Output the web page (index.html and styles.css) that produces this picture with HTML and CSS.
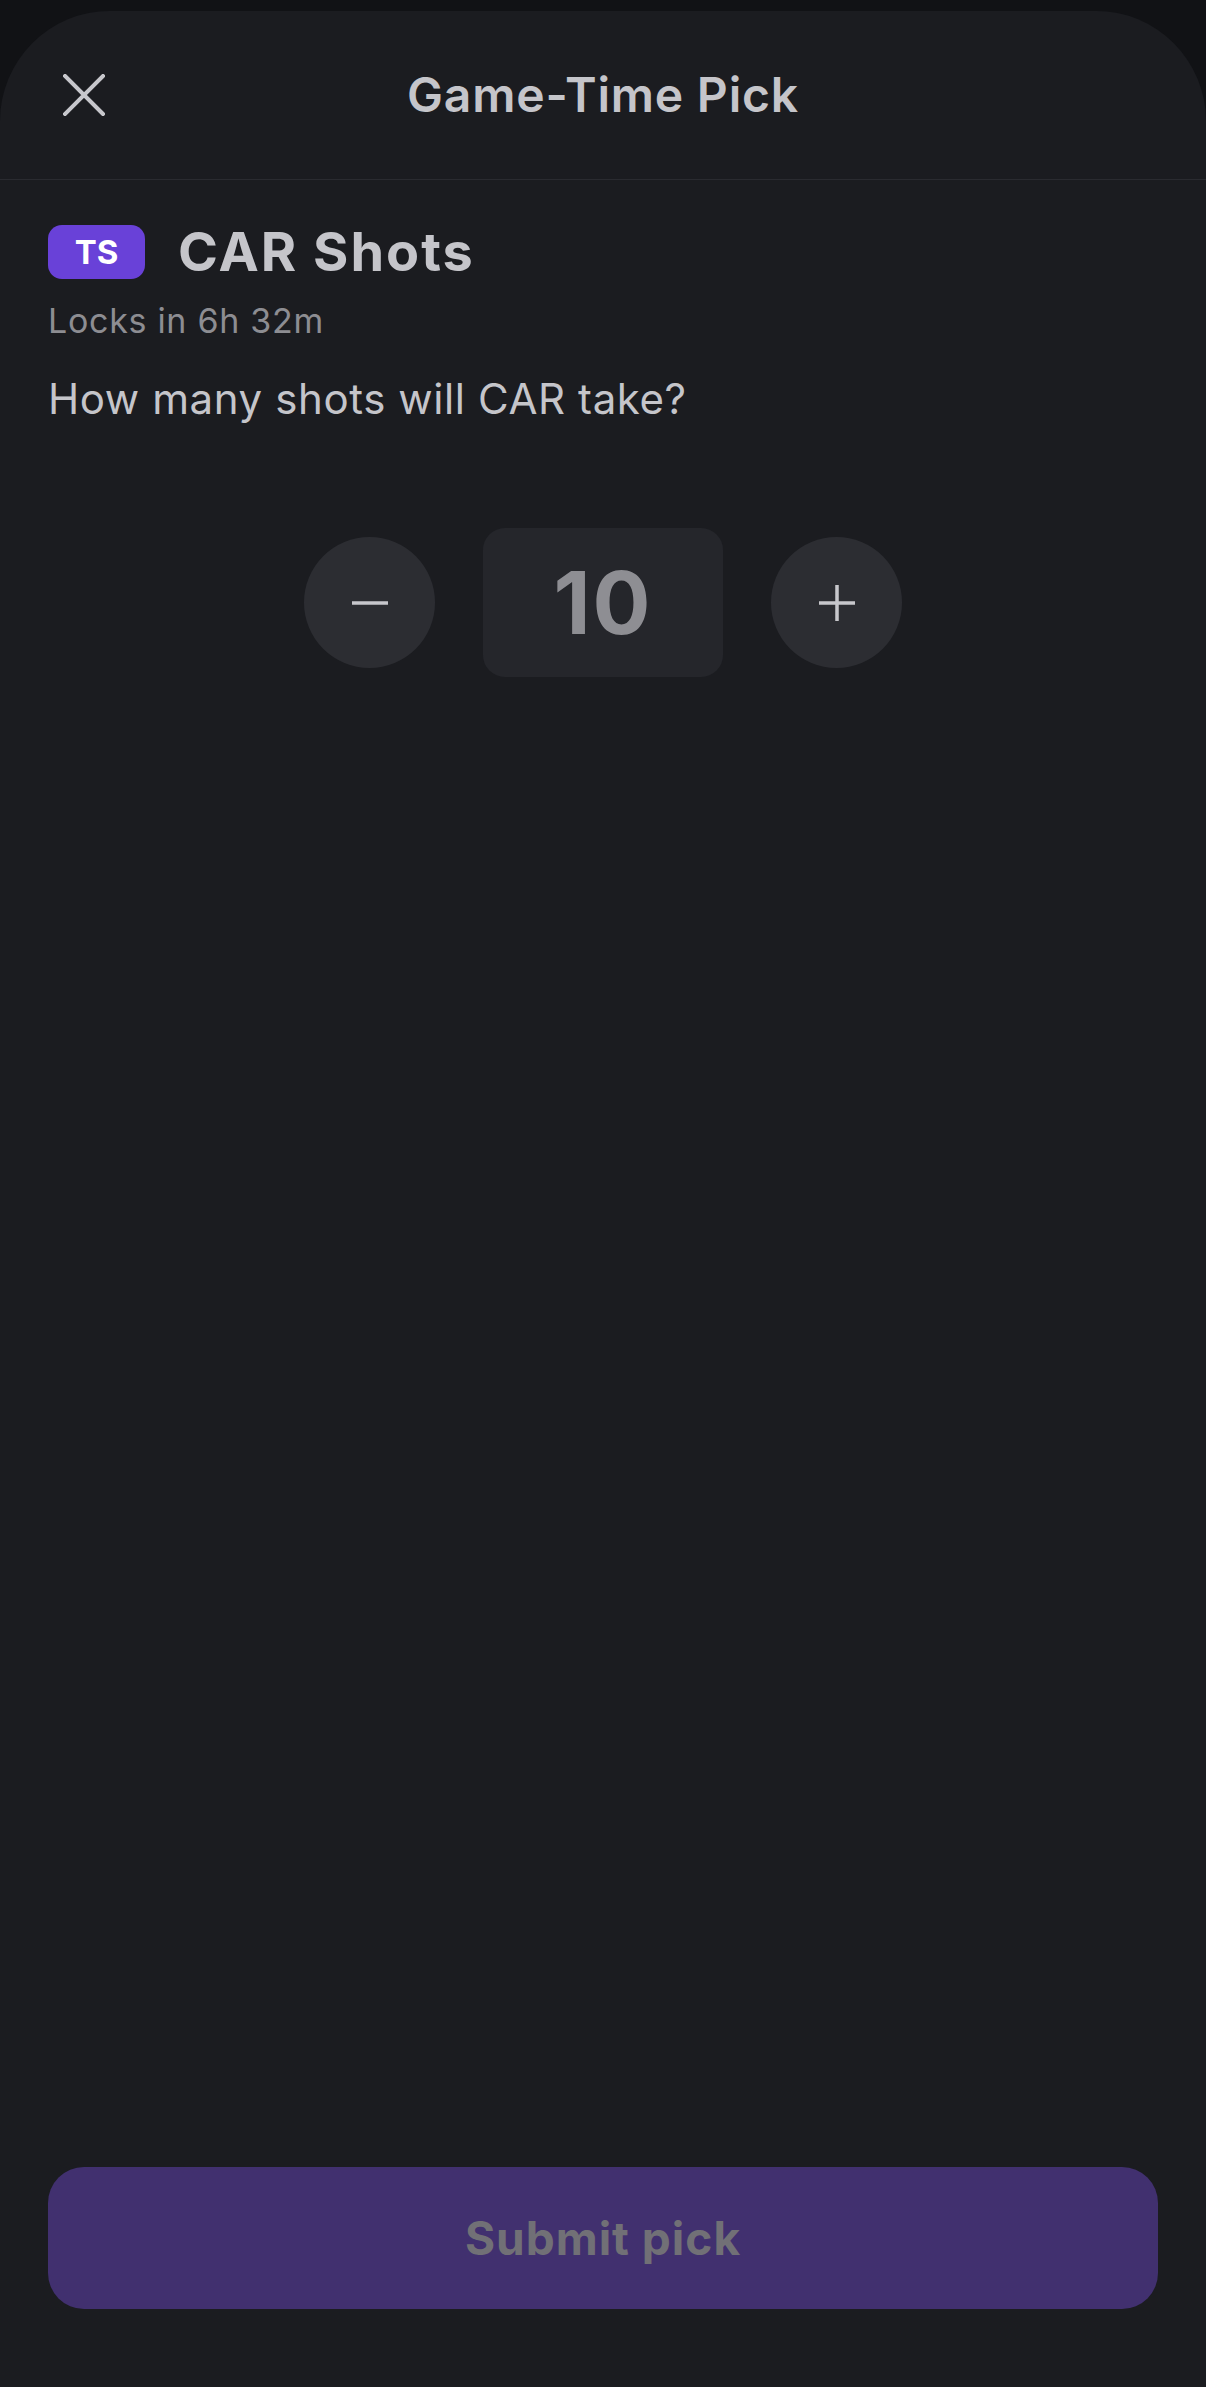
FILE: index.html
```html
<!DOCTYPE html>
<html>
<head>
  <meta charset="utf-8">
  <title>Game-Time Pick</title>
  <link rel="stylesheet" href="styles.css">
</head>
<body>
<div class="sheet">
  <header class="sheet-header">
    <div class="close-wrap">
      <button class="close-btn" type="button" aria-label="Close">
        <svg width="42" height="42" viewBox="0 0 42 42">
          <path d="M2 2 L40 40 M40 2 L2 40" stroke="#c7c7cc" stroke-width="4" stroke-linecap="square" fill="none"/>
        </svg>
      </button>
    </div>
    <h1>Game-Time Pick</h1>
    <div></div>
  </header>

  <div class="content">
    <div class="pick-title">
      <span class="badge">TS</span>
      <h2>CAR Shots</h2>
    </div>
    <p class="locks">Locks in 6h 32m</p>
    <p class="question">How many shots will CAR take?</p>

    <div class="stepper">
      <button class="step-btn" type="button" aria-label="Decrease">
        <svg width="36" height="36" viewBox="0 0 36 36">
          <path d="M0 18 H36" stroke="#c7c7cc" stroke-width="3.5" fill="none"/>
        </svg>
      </button>
      <div class="step-value">10</div>
      <button class="step-btn" type="button" aria-label="Increase">
        <svg width="36" height="36" viewBox="0 0 36 36">
          <path d="M0 18 H36 M18 0 V36" stroke="#c7c7cc" stroke-width="3.5" fill="none"/>
        </svg>
      </button>
    </div>
  </div>

  <div class="spacer"></div>

  <div class="footer">
    <button class="submit-btn" type="button" disabled>Submit pick</button>
  </div>
</div>
</body>
</html>
```

FILE: styles.css
```css
html, body {
  margin: 0;
  padding: 0;
}
body {
  background-color: #111215;
  font-family: Inter, "Noto Sans", "Liberation Sans", sans-serif;
  padding-top: 11px;
}
.sheet {
  background-color: #1b1c20;
  border-radius: 110px 110px 0 0;
  min-height: calc(100vh - 11px);
  display: flex;
  flex-direction: column;
}
.sheet-header {
  height: 168px;
  border-bottom: 1px solid #2a2b30;
  display: grid;
  grid-template-columns: 1fr auto 1fr;
  align-items: center;
}
.close-wrap {
  padding-left: 63px;
}
.close-btn {
  background: none;
  border: none;
  padding: 0;
  width: 42px;
  height: 42px;
  display: block;
  cursor: pointer;
}
.sheet-header h1 {
  margin: 0;
  font-size: 48px;
  font-weight: 600;
  letter-spacing: 0.8px;
  color: #c5c5ca;
  line-height: 56px;
}
.content {
  padding: 45px 48px 0 48px;
}
.pick-title {
  display: flex;
  align-items: center;
  height: 54px;
}
.badge {
  width: 97px;
  height: 54px;
  border-radius: 14px;
  background-color: #6941d8;
  color: #ffffff;
  font-size: 33px;
  font-weight: 700;
  display: flex;
  align-items: center;
  justify-content: center;
  margin-right: 33px;
}
.pick-title h2 {
  margin: 0;
  font-size: 54px;
  font-weight: 700;
  letter-spacing: 2px;
  color: #c5c5ca;
  line-height: 60px;
}
.locks {
  margin: 22px 0 0 0;
  font-size: 34px;
  letter-spacing: 0.7px;
  line-height: 40px;
  color: #8d8d92;
}
.question {
  margin: 33px 0 0 0;
  font-size: 42px;
  letter-spacing: 0.6px;
  line-height: 50px;
  color: #c5c5ca;
}
.stepper {
  margin-top: 104px;
  display: flex;
  align-items: center;
  justify-content: center;
  gap: 48px;
}
.step-btn {
  width: 131px;
  height: 131px;
  border-radius: 50%;
  border: none;
  background-color: #2c2d32;
  display: flex;
  align-items: center;
  justify-content: center;
  padding: 0;
  cursor: pointer;
}
.step-value {
  width: 240px;
  height: 149px;
  border-radius: 22px;
  background-color: #25262b;
  color: #8e8e93;
  font-size: 86px;
  font-weight: 700;
  letter-spacing: 2px;
  display: flex;
  align-items: center;
  justify-content: center;
}
.spacer {
  flex: 1;
}
.footer {
  padding: 0 48px 78px 48px;
}
.submit-btn {
  width: 100%;
  height: 142px;
  border: none;
  border-radius: 36px;
  background-color: #41306f;
  color: #717076;
  font-family: Inter, "Noto Sans", "Liberation Sans", sans-serif;
  font-size: 46px;
  font-weight: 700;
  letter-spacing: 1px;
  display: block;
}
```
